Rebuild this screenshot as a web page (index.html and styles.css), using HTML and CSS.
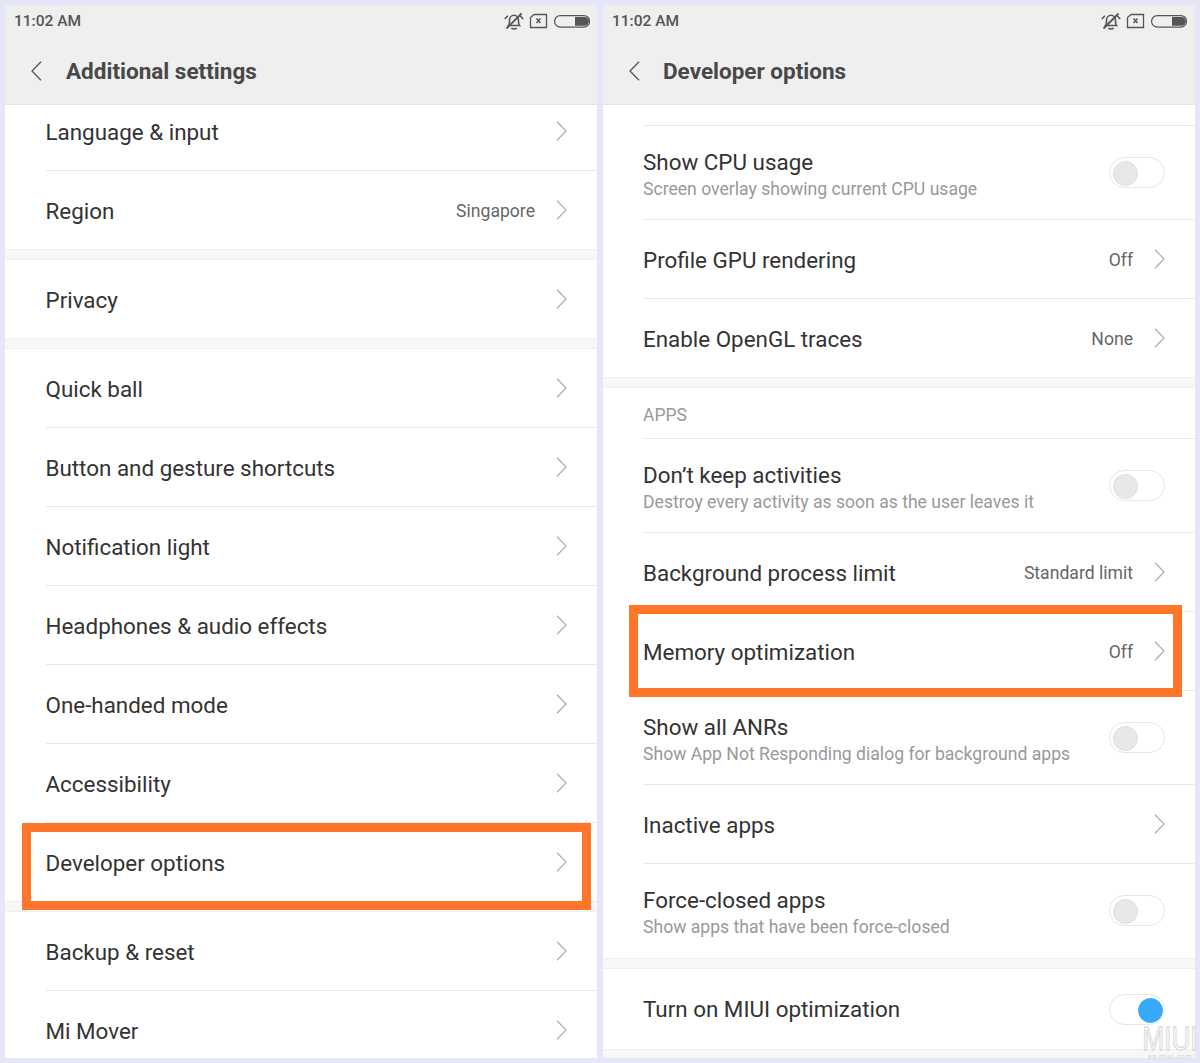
FILE: index.html
```html
<!DOCTYPE html>
<html lang="en">
<head>
    <meta charset="UTF-8">
    <meta name="viewport" content="width=device-width, initial-scale=1.0">
    <title>MIUI Developer options</title>
    <link rel="stylesheet" href="styles.css">
</head>
<body>
    <svg class="defs" width="0" height="0">
        <symbol id="chevron" viewBox="0 0 11 20">
            <path d="M1 .7 10 10 1 19.3" fill="none" stroke="currentColor" stroke-width="1.3"/>
        </symbol>
        <symbol id="status-icons" viewBox="0 0 86 18">
            <g fill="none" stroke="#555" stroke-width="1.6">
                <path d="M4.500 13.500c1.200-1.500 1-3.200 1-5 0-3 2-5.200 4.500-5.200s4.500 2.200 4.500 5.200c0 1.800-.2 3.500 1 5z"/>
                <path d="M.8 7 3.800 3.800M19.200 7 16.200 3.800M7.500 15.800c.8 1.500 4.200 1.500 5 0"/>
                <path d="M2.500 16.500 17.500 1.500" stroke-width="1.800"/>
                <path d="M26.500 5.500 30 2.500h12.500v13h-16z" stroke-width="1.300"/>
                <path d="M32.500 6.500l4 4.500M36.500 6.500l-4 4.500" stroke-width="1.500"/>
                <rect x="50.600" y="3.600" width="35" height="11.500" rx="5.700" stroke-width="1.200"/>
            </g>
            <path d="M71 5h9.500a4.300 4.300 0 0 1 0 8.700H71z" fill="#555"/>
        </symbol>
    </svg>

    <div class="screens">
        <section class="screen">
            <header class="topbar">
                <div class="statusbar">
                    <span class="time">11:02 AM</span>
                    <svg class="status-icons"><use href="#status-icons"/></svg>
                </div>
                <div class="titlebar">
                    <svg class="back"><use href="#chevron"/></svg>
                    <h1>Additional settings</h1>
                </div>
            </header>

            <div class="list">
                <div class="row row-clipped"><div class="row-inner"><span class="label">Language &amp; input</span><svg class="chevron"><use href="#chevron"/></svg></div></div>
                <div class="row row-last"><div class="row-inner"><span class="label">Region</span><span class="value">Singapore</span><svg class="chevron"><use href="#chevron"/></svg></div></div>
                <div class="gap"></div>
                <div class="row row-last"><div class="row-inner"><span class="label">Privacy</span><svg class="chevron"><use href="#chevron"/></svg></div></div>
                <div class="gap"></div>
                <div class="row"><div class="row-inner"><span class="label">Quick ball</span><svg class="chevron"><use href="#chevron"/></svg></div></div>
                <div class="row"><div class="row-inner"><span class="label">Button and gesture shortcuts</span><svg class="chevron"><use href="#chevron"/></svg></div></div>
                <div class="row"><div class="row-inner"><span class="label">Notification light</span><svg class="chevron"><use href="#chevron"/></svg></div></div>
                <div class="row"><div class="row-inner"><span class="label">Headphones &amp; audio effects</span><svg class="chevron"><use href="#chevron"/></svg></div></div>
                <div class="row"><div class="row-inner"><span class="label">One-handed mode</span><svg class="chevron"><use href="#chevron"/></svg></div></div>
                <div class="row"><div class="row-inner"><span class="label">Accessibility</span><svg class="chevron"><use href="#chevron"/></svg></div></div>
                <div class="row row-last"><div class="row-inner"><span class="label">Developer options</span><svg class="chevron"><use href="#chevron"/></svg></div></div>
                <div class="gap"></div>
                <div class="row"><div class="row-inner"><span class="label">Backup &amp; reset</span><svg class="chevron"><use href="#chevron"/></svg></div></div>
                <div class="row row-last"><div class="row-inner"><span class="label">Mi Mover</span><svg class="chevron"><use href="#chevron"/></svg></div></div>
            </div>

            <div class="highlight highlight-left"></div>
        </section>

        <section class="screen screen-dev">
            <header class="topbar">
                <div class="statusbar">
                    <span class="time">11:02 AM</span>
                    <svg class="status-icons"><use href="#status-icons"/></svg>
                </div>
                <div class="titlebar">
                    <svg class="back"><use href="#chevron"/></svg>
                    <h1>Developer options</h1>
                </div>
            </header>

            <div class="list">
                <div class="row row-stub"><div class="row-inner"></div></div>
                <div class="row row-tall"><div class="row-inner"><div class="text"><span class="label">Show CPU usage</span><span class="sub">Screen overlay showing current CPU usage</span></div><span class="toggle"></span></div></div>
                <div class="row"><div class="row-inner"><span class="label">Profile GPU rendering</span><span class="value">Off</span><svg class="chevron"><use href="#chevron"/></svg></div></div>
                <div class="row row-last"><div class="row-inner"><span class="label">Enable OpenGL traces</span><span class="value">None</span><svg class="chevron"><use href="#chevron"/></svg></div></div>
                <div class="gap"></div>
                <div class="row row-heading"><div class="row-inner">APPS</div></div>
                <div class="row row-tall"><div class="row-inner"><div class="text"><span class="label">Don’t keep activities</span><span class="sub">Destroy every activity as soon as the user leaves it</span></div><span class="toggle"></span></div></div>
                <div class="row"><div class="row-inner"><span class="label">Background process limit</span><span class="value">Standard limit</span><svg class="chevron"><use href="#chevron"/></svg></div></div>
                <div class="row"><div class="row-inner"><span class="label">Memory optimization</span><span class="value">Off</span><svg class="chevron"><use href="#chevron"/></svg></div></div>
                <div class="row row-tall"><div class="row-inner"><div class="text"><span class="label">Show all ANRs</span><span class="sub">Show App Not Responding dialog for background apps</span></div><span class="toggle"></span></div></div>
                <div class="row"><div class="row-inner"><span class="label">Inactive apps</span><svg class="chevron"><use href="#chevron"/></svg></div></div>
                <div class="row row-tall row-plain"><div class="row-inner"><div class="text"><span class="label">Force-closed apps</span><span class="sub">Show apps that have been force-closed</span></div><span class="toggle"></span></div></div>
                <div class="gap"></div>
                <div class="row row-switch"><div class="row-inner"><span class="label">Turn on MIUI optimization</span><span class="toggle toggle-on"></span></div></div>
                <div class="gap"></div>
            </div>

            <div class="highlight highlight-right"></div>
        </section>
    </div>

    <div class="watermark">
        <span class="watermark-logo">MIUI</span>
        <span class="watermark-url">en.miui.com</span>
    </div>
</body>
</html>
```

FILE: styles.css
```css
* {
    margin: 0;
    padding: 0;
    box-sizing: border-box;
}

body {
    background: #e6e6fa;
    font-family: Roboto, "Liberation Sans", sans-serif;
    height: 1063px;
    overflow: hidden;
    position: relative;
}

.defs {
    position: absolute;
}

.screens {
    display: flex;
    gap: 6px;
    padding: 5px;
}

.screen {
    position: relative;
    width: 592px;
    height: 1053px;
    background: #fff;
    overflow: hidden;
}

.topbar {
    height: 100px;
    background: #efefef;
    border-bottom: 1px solid #e2e2e2;
}

.statusbar {
    height: 31px;
    display: flex;
    align-items: center;
    justify-content: space-between;
    padding: 0 7px 0 9px;
}

.screen-dev .statusbar {
    padding-right: 8px;
}

.time {
    font-size: 15.5px;
    font-weight: 500;
    color: #555;
}

.status-icons {
    width: 86px;
    height: 18px;
}

.titlebar {
    height: 68px;
    display: flex;
    align-items: center;
    padding: 1px 0 0 26px;
}

.back {
    width: 11px;
    height: 20px;
    color: #555;
    margin-right: 24px;
    transform: scaleX(-1);
}

.screen-dev .back {
    margin-right: 23px;
}

.titlebar h1 {
    font-size: 22.5px;
    font-weight: 700;
    color: #484848;
}

.row {
    height: 79px;
    padding-left: 40.5px;
}

.screen-dev .row {
    padding-left: 40px;
}

.row-inner {
    height: 100%;
    display: flex;
    align-items: center;
    padding: 2px 30px 0 0;
    border-bottom: 1px solid #e8e8e8;
}

.row-last {
    height: 78px;
}

.row-last .row-inner,
.row-switch .row-inner {
    border-bottom: none;
}

.row-plain .row-inner {
    border-bottom-color: transparent;
}

.row-tall {
    height: 94px;
}

.row-tall .row-inner {
    padding-top: 0;
}

.row-clipped {
    height: 66px;
}

.row-clipped .row-inner {
    padding-top: 0;
    padding-bottom: 12px;
}

.row-stub {
    height: 21px;
}

.row-heading {
    height: 51px;
}

.row-heading .row-inner {
    padding-top: 4px;
    font-size: 17.5px;
    color: #999;
}

.row-switch {
    height: 80px;
}

.row-switch .row-inner {
    padding-top: 0;
}

.label {
    font-size: 22.4px;
    color: #333;
}

.text {
    display: flex;
    flex-direction: column;
    gap: 4px;
    padding-top: 3px;
}

.sub {
    font-size: 17.6px;
    color: #999;
}

.value {
    margin-left: auto;
    margin-right: 21px;
    font-size: 17.6px;
    color: #666;
}

.chevron {
    width: 11px;
    height: 20px;
    color: #b0b0b0;
    margin-left: auto;
    margin-top: -2px;
}

.value + .chevron {
    margin-left: 0;
}

.toggle {
    position: relative;
    margin-left: auto;
    width: 56px;
    height: 31px;
    border: 1px solid #e6e6e6;
    border-radius: 16px;
    background: #fff;
}

.toggle::after {
    content: "";
    position: absolute;
    left: 3px;
    top: 3px;
    width: 23px;
    height: 23px;
    border-radius: 50%;
    background: #e8e8e8;
    border: 1px solid #dedede;
}

.toggle-on::after {
    left: 28px;
    background: #36a9fb;
    border-color: #36a9fb;
}

.gap {
    height: 11px;
    background: #f7f7f7;
    border-top: 1px solid #efefef;
    border-bottom: 1px solid #efefef;
}

/* orange boxes drawn over the screenshots */
.highlight {
    position: absolute;
    border: 9px solid #ff7629;
}

.highlight-left {
    left: 17px;
    top: 818px;
    width: 569px;
    height: 87px;
}

.highlight-right {
    left: 26px;
    top: 600px;
    width: 553px;
    height: 92px;
}

.watermark {
    position: absolute;
    left: 1141px;
    top: 1027px;
    width: 58px;
    display: flex;
    flex-direction: column;
    align-items: center;
}

.watermark-logo {
    font-family: "Liberation Sans", sans-serif;
    font-size: 26px;
    line-height: 19px;
    color: #fff;
    -webkit-text-stroke: 1px #dadada;
    transform: scaleY(1.3);
    transform-origin: top;
}

.watermark-url {
    margin-top: 7px;
    font-size: 7px;
    line-height: 8px;
    letter-spacing: .5px;
    color: #cfcfcf;
}
```
